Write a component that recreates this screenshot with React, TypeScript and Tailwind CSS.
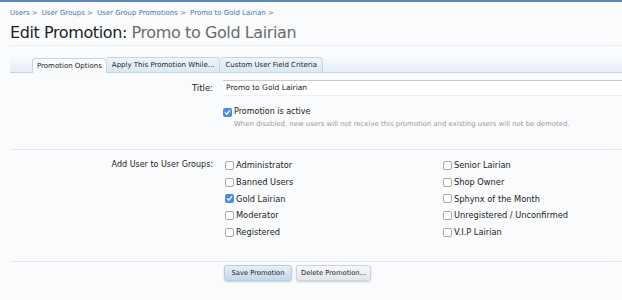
import React from "react"

const GROUPS_LEFT = [
  { label: "Administrator", checked: false },
  { label: "Banned Users", checked: false },
  { label: "Gold Lairian", checked: true },
  { label: "Moderator", checked: false },
  { label: "Registered", checked: false },
]

const GROUPS_RIGHT = [
  { label: "Senior Lairian", checked: false },
  { label: "Shop Owner", checked: false },
  { label: "Sphynx of the Month", checked: false },
  { label: "Unregistered / Unconfirmed", checked: false },
  { label: "V.I.P Lairian", checked: false },
]

function Box({ checked }: { checked: boolean }) {
  if (checked) {
    return (
      <span className="w-[9px] h-[9px] rounded-[2px] bg-[#4a90e2] flex items-center justify-center shrink-0">
        <svg width="7" height="7" viewBox="0 0 8 8">
          <path d="M1.5 4.2 L3.2 6 L6.5 1.8" fill="none" stroke="white" strokeWidth="1.4" strokeLinecap="round" strokeLinejoin="round" />
        </svg>
      </span>
    )
  }
  return <span className="w-[9px] h-[9px] rounded-[2px] border border-[#a9a9a9] bg-white shrink-0" />
}

function Check({ label, checked }: { label: string; checked: boolean }) {
  return (
    <div className="flex items-center gap-[2px] h-[16.75px]">
      <Box checked={checked} />
      <span className="text-[#222]">{label}</span>
    </div>
  )
}

export default function App() {
  return (
    <div
      className="w-[622px] h-[300px] overflow-hidden bg-[#fafbfd] border-t-2 border-[#5b86b5] pl-[10px] text-[8px] text-[#222]"
      style={{ fontFamily: "'DejaVu Sans', Verdana, sans-serif" }}
    >
      {/* breadcrumb */}
      <div className="flex gap-[4px] pt-[6px] h-[16px] text-[7px] text-[#4a74a8] leading-[10px]">
        {["Users", "User Groups", "User Group Promotions", "Promo to Gold Lairian"].map((c) => (
          <span key={c}>
            {c} <span className="text-[#777]">&gt;</span>
          </span>
        ))}
      </div>

      {/* heading */}
      <h1 className="mt-[5px] pb-[2px] border-b border-[#eceef2] text-[16px] leading-[20px] tracking-[-0.4px]">
        <span className="text-[#1e1e1e]">Edit Promotion: </span>
        <span className="text-[#6b6b6b]">Promo to Gold Lairian</span>
      </h1>

      {/* tabs */}
      <div className="mt-[10px] h-[17px] flex items-end pl-[22px] border-b border-[#c3d6e6] bg-gradient-to-b from-[#fafbfd] to-[#e6eef6]">
        <div className="h-[15px] px-[4px] flex items-center bg-[#f8fafc] border border-b-0 border-[#c3d6e6] rounded-t-[4px] text-[7px] -mb-px">
          Promotion Options
        </div>
        <div className="h-[15px] px-[5px] flex items-center bg-gradient-to-b from-[#eef4fa] to-[#dce8f3] border border-l-0 border-b-0 border-[#c3d6e6] rounded-tr-[4px] text-[7px]">
          Apply This Promotion While...
        </div>
        <div className="h-[15px] px-[5px] flex items-center bg-gradient-to-b from-[#eef4fa] to-[#dce8f3] border border-l-0 border-b-0 border-[#c3d6e6] rounded-t-[4px] text-[7px]">
          Custom User Field Criteria
        </div>
      </div>

      {/* title row */}
      <div className="flex mt-[7px]">
        <div className="w-[203px] text-right leading-[16px] text-[8.5px]">Title:</div>
        <div className="ml-[10px] flex-1">
          <div className="h-[16px] bg-white border-t border-[#c9c9cc] border-b border-b-[#eee] pl-[3px] flex items-center text-[7.5px]">
            Promo to Gold Lairian
          </div>
          <div className="mt-[11px] h-[10px] flex items-center gap-[2px]">
            <Box checked />
            <span className="text-[8px]">Promotion is active</span>
          </div>
          <div className="mt-[2.5px] h-[9px] leading-[9px] pl-[11px] text-[6.9px] text-[#9a9a9a]">
            When disabled, new users will not receive this promotion and existing users will not be demoted.
          </div>
        </div>
      </div>

      <div className="mt-[20.5px] border-t border-[#e6e8ec]" />

      {/* groups */}
      <div className="flex mt-[7px]">
        <div className="w-[203px] text-right leading-[16.75px]">Add User to User Groups:</div>
        <div className="ml-[12px] w-[218px] text-[8.25px]">
          {GROUPS_LEFT.map((g) => (
            <Check key={g.label} {...g} />
          ))}
        </div>
        <div className="text-[8.25px]">
          {GROUPS_RIGHT.map((g) => (
            <Check key={g.label} {...g} />
          ))}
        </div>
      </div>

      <div className="mt-[20px] border-t border-[#e6e8ec]" />

      {/* buttons */}
      <div className="flex gap-[4px] mt-[3px] ml-[214px]">
        <button className="h-[16px] w-[68px] rounded-[3px] bg-gradient-to-b from-[#e7f0f8] to-[#c3d8ea] border border-[#b8cde0] shadow-[0_1px_2px_rgba(0,0,0,0.2)] text-[6.75px] text-[#222]">
          Save Promotion
        </button>
        <button className="h-[16px] w-[75px] rounded-[3px] bg-gradient-to-b from-[#f6f7f9] to-[#e3e6ea] border border-[#d0d4da] shadow-[0_1px_2px_rgba(0,0,0,0.2)] text-[6.75px] text-[#222]">
          Delete Promotion...
        </button>
      </div>
    </div>
  )
}
